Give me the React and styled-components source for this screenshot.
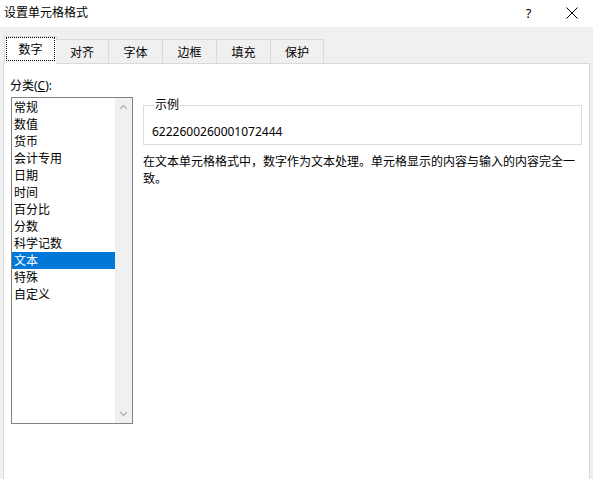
import React from 'react'
import styled, { createGlobalStyle } from 'styled-components'

const GlobalStyle = createGlobalStyle`
  html, body {
    margin: 0;
    padding: 0;
    background: #f0f0f0;
  }
  body {
    font-family: "Noto Sans", "Noto Sans CJK SC", sans-serif;
    font-size: 12px;
    color: #000;
  }
`

const Window = styled.div`
  width: 593px;
  height: 479px;
  display: flex;
  flex-direction: column;
  overflow: hidden;
  background: #f0f0f0;
`

const TitleBar = styled.div`
  height: 27px;
  flex: none;
  background: #fff;
  display: flex;
  align-items: center;
  padding-left: 4px;
  padding-bottom: 2px;
  box-sizing: border-box;
`

const Title = styled.div`
  flex: 1;
  line-height: 17px;
`

const TitleButton = styled.div`
  width: 43px;
  height: 24px;
  display: flex;
  align-items: center;
  justify-content: center;
  font-size: 13px;
`

const Body = styled.div`
  flex: 1;
  display: flex;
  flex-direction: column;
  padding: 9px 3px 0 3px;
`

const TabRow = styled.div`
  display: flex;
  align-items: flex-end;
  padding-left: 1px;
  position: relative;
  z-index: 1;
  margin-bottom: -1px;
`

const Tab = styled.div`
  box-sizing: border-box;
  width: ${p => p.$w}px;
  height: ${p => (p.$active ? 28 : 25)}px;
  display: flex;
  align-items: center;
  justify-content: center;
  border: 1px solid #d9d9d9;
  border-left-width: ${p => (p.$first || p.$active ? 1 : 0)}px;
  border-bottom-color: ${p => (p.$active ? '#fff' : '#d9d9d9')};
  background: ${p => (p.$active ? '#fff' : '#f0f0f0')};
  margin-right: ${p => (p.$active ? -1 : 0)}px;
  padding-bottom: ${p => (p.$active ? 2 : 0)}px;
  position: relative;
`

const FocusLabel = styled.span`
  display: flex;
  align-items: center;
  justify-content: center;
  width: 47px;
  height: 22px;
  outline: 1px dotted #000;
  outline-offset: 0;
`

const Panel = styled.div`
  flex: 1;
  background: #fff;
  border: 1px solid #d9d9d9;
  border-bottom: none;
  display: flex;
  padding: 13px 7px 0 0;
`

const LeftColumn = styled.div`
  display: flex;
  flex-direction: column;
  padding-left: 6px;
`

const Label = styled.div`
  line-height: 17px;
  u {
    text-decoration: underline;
  }
`

const ListBox = styled.div`
  box-sizing: border-box;
  margin-top: 3px;
  margin-left: 1px;
  width: 122px;
  height: 327px;
  border: 1px solid #828282;
  display: flex;
`

const Items = styled.div`
  flex: 1;
  display: flex;
  flex-direction: column;
  padding-top: 1px;
`

const Item = styled.div`
  height: 17px;
  line-height: 17px;
  padding-left: 2px;
  background: ${p => (p.$selected ? '#0078d7' : 'transparent')};
  color: ${p => (p.$selected ? '#fff' : '#000')};
`

const ScrollBar = styled.div`
  width: 17px;
  background: #f0f0f0;
  display: flex;
  flex-direction: column;
  justify-content: space-between;
  align-items: center;
  padding: 6px 0 6px;
`

const RightColumn = styled.div`
  flex: 1;
  margin-left: 10px;
  margin-top: 21px;
  display: flex;
  flex-direction: column;
`

const GroupBox = styled.fieldset`
  margin: 0;
  border: 1px solid #dcdcdc;
  padding: 0 8px 4px 8px;
`

const Legend = styled.legend`
  padding: 0 1px;
  margin-left: 2px;
  line-height: 14px;
`

const Sample = styled.div`
  line-height: 17px;
  margin-top: 11px;
  font-size: 12px;
`

const Description = styled.div`
  margin-top: 8px;
  line-height: 17px;
`

const Chevron = ({ up }) => (
  <svg width="9" height="6" viewBox="0 0 9 6">
    <path
      d={up ? 'M1 5 L4.5 1.5 L8 5' : 'M1 1 L4.5 4.5 L8 1'}
      fill="none"
      stroke="#b4b4b4"
      strokeWidth="1.4"
    />
  </svg>
)

const tabs = [
  { name: '数字', w: 53 },
  { name: '对齐', w: 53 },
  { name: '字体', w: 54 },
  { name: '边框', w: 54 },
  { name: '填充', w: 54 },
  { name: '保护', w: 53 },
]

const categories = ['常规', '数值', '货币', '会计专用', '日期', '时间', '百分比', '分数', '科学记数', '文本', '特殊', '自定义']

export default function App() {
  return (
    <Window>
      <GlobalStyle />
      <TitleBar>
        <Title>设置单元格格式</Title>
        <TitleButton>?</TitleButton>
        <TitleButton>
          <svg width="12" height="12" viewBox="0 0 12 12">
            <path d="M0.5 0.5 L11.5 11.5 M11.5 0.5 L0.5 11.5" stroke="#000" strokeWidth="1" />
          </svg>
        </TitleButton>
      </TitleBar>
      <Body>
        <TabRow>
          {tabs.map((t, i) => (
            <Tab key={t.name} $w={t.w} $active={i === 0} $first={i === 0}>
              {i === 0 ? <FocusLabel>{t.name}</FocusLabel> : t.name}
            </Tab>
          ))}
        </TabRow>
        <Panel>
          <LeftColumn>
            <Label>分类(<u>C</u>):</Label>
            <ListBox>
              <Items>
                {categories.map(c => (
                  <Item key={c} $selected={c === '文本'}>{c}</Item>
                ))}
              </Items>
              <ScrollBar>
                <Chevron up />
                <Chevron />
              </ScrollBar>
            </ListBox>
          </LeftColumn>
          <RightColumn>
            <GroupBox>
              <Legend>示例</Legend>
              <Sample>6222600260001072444</Sample>
            </GroupBox>
            <Description>
              在文本单元格格式中，数字作为文本处理。单元格显示的内容与输入的内容完全一致。
            </Description>
          </RightColumn>
        </Panel>
      </Body>
    </Window>
  )
}
